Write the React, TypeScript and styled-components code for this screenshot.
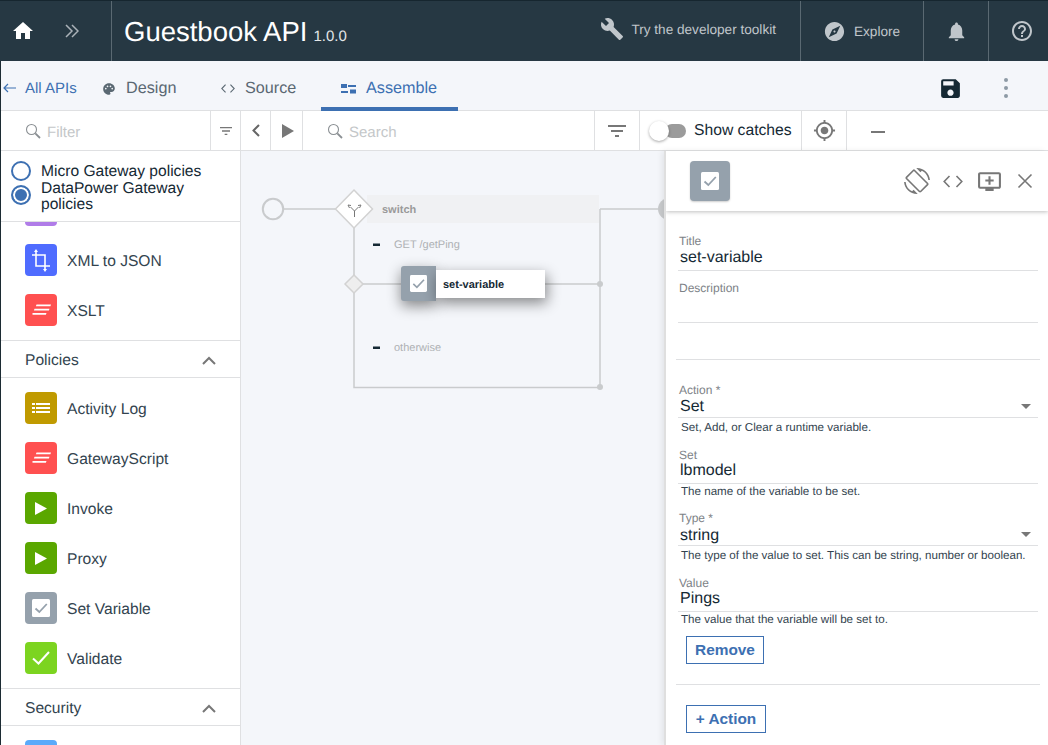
import React from "react";
import styled, { createGlobalStyle } from "styled-components";
import {
  MdAddToQueue,
  MdBuild,
  MdExplore,
  MdFilterList,
  MdGpsFixed,
  MdHelpOutline,
  MdHome,
  MdNotifications,
  MdPalette,
  MdSave,
  MdScreenRotation,
} from "react-icons/md";

const GlobalStyle = createGlobalStyle`
  html, body {
    margin: 0;
    padding: 0;
    background: #1c2b33;
  }
  * {
    box-sizing: border-box;
  }
`;

const Page = styled.div`
  width: 1048px;
  height: 745px;
  padding-left: 1px;
  overflow: hidden;
  display: flex;
  flex-direction: column;
  background: #1c2b33;
  font-family: "Liberation Sans", Arial, sans-serif;
  text-rendering: geometricPrecision;
  color: #152934;
`;

/* top bar */
const Header = styled.header`
  height: 61px;
  flex: none;
  display: flex;
  align-items: stretch;
  margin-left: -1px;
  background: #263843;
  border-top: 1px solid #16262f;
  color: #c0c6cb;
`;

const HomeCell = styled.div`
  width: 112px;
  display: flex;
  align-items: center;
  padding-left: 11px;
  gap: 30px;
  border-right: 1px solid #5a6972;
`;

const Title = styled.div`
  display: flex;
  align-items: baseline;
  flex: 1;
  padding: 13px 0 0 12px;
  font-size: 27.5px;
  line-height: 36px;
  color: #fff;
`;

const Version = styled.span`
  font-size: 15px;
  margin-left: 6px;
  color: #e4e7e9;
`;

const Toolkit = styled.div`
  display: flex;
  align-items: center;
  gap: 7px;
  padding: 0 24px 4px 0;
  font-size: 13.6px;
  border-right: 1px solid #5a6972;
`;

const Explore = styled.div`
  width: 123px;
  display: flex;
  align-items: center;
  gap: 8px;
  padding-left: 22px;
  font-size: 13.6px;
  border-right: 1px solid #5a6972;
`;

const HeaderIcon = styled.div<{ $w: number; $line?: boolean; $pad?: number }>`
  width: ${(p) => p.$w}px;
  display: flex;
  align-items: center;
  justify-content: center;
  padding-left: ${(p) => p.$pad ?? 0}px;
  border-right: ${(p) => (p.$line ? "1px solid #5a6972" : "none")};
`;

/* tabs */
const Nav = styled.nav`
  height: 50px;
  flex: none;
  display: flex;
  align-items: stretch;
  background: #f4f6fa;
  border-bottom: 1px solid #dfe0e2;
  font-size: 16.2px;
`;

const Back = styled.a`
  display: flex;
  align-items: center;
  gap: 9px;
  padding: 5px 0 0 2px;
  color: #3d70b2;
  font-size: 15px;
  width: 81px;
`;

const Tab = styled.div<{ $active?: boolean; $w: number }>`
  width: ${(p) => p.$w}px;
  display: flex;
  align-items: center;
  gap: 10px;
  padding: 9px 0 0 20px;
  color: ${(p) => (p.$active ? "#3d70b2" : "#5a6872")};
  border-bottom: 4px solid ${(p) => (p.$active ? "#3d70b2" : "transparent")};
  margin-bottom: -1px;
`;

const NavActions = styled.div`
  margin-left: auto;
  display: flex;
  align-items: center;
  gap: 41px;
  padding: 5px 40px 0 0;
`;

const Dots = styled.div`
  display: flex;
  flex-direction: column;
  gap: 4px;
  i {
    display: block;
    width: 4px;
    height: 4px;
    border-radius: 50%;
    background: #8d9aa5;
  }
`;

/* toolbar */
const Toolbar = styled.div`
  height: 40px;
  flex: none;
  display: flex;
  background: #fff;
  border-bottom: 1px solid #dfe0e2;
`;

const Cell = styled.div<{ $w: number; $pad?: number }>`
  width: ${(p) => p.$w}px;
  flex: none;
  display: flex;
  align-items: center;
  justify-content: center;
  padding-left: ${(p) => p.$pad ?? 0}px;
  border-right: 1px solid #dfe0e2;
`;

const SearchCell = styled.div<{ $w: number; $pad: number }>`
  width: ${(p) => p.$w}px;
  flex: none;
  display: flex;
  align-items: center;
  gap: 6px;
  padding-left: ${(p) => p.$pad}px;
  font-size: 15px;
  color: #c4c7c9;
  border-right: 1px solid #dfe0e2;
`;

const Placeholder = styled.span`
  margin-top: 3px;
`;

const CatchCell = styled.div`
  width: 162px;
  flex: none;
  position: relative;
  display: flex;
  align-items: center;
  padding-left: 54px;
  font-size: 15.7px;
  white-space: nowrap;
  border-right: 1px solid #dfe0e2;
`;

const Track = styled.span`
  position: absolute;
  left: 25px;
  top: 13px;
  width: 21px;
  height: 14px;
  border-radius: 7px;
  background: #9b9b9b;
`;

const Knob = styled.span`
  position: absolute;
  left: 9px;
  top: 10px;
  width: 20px;
  height: 20px;
  border-radius: 50%;
  background: #fff;
  box-shadow: 0 1px 3px rgba(0, 0, 0, 0.35);
`;

const Minus = styled.div`
  width: 14px;
  height: 2px;
  margin: 2px 0 0 24px;
  align-self: center;
  background: #777;
`;

/* main area */
const Main = styled.div`
  flex: 1;
  min-height: 0;
  display: flex;
`;

const Sidebar = styled.aside`
  width: 240px;
  flex: none;
  display: flex;
  flex-direction: column;
  background: #fff;
  border-right: 1px solid #dfe0e2;
`;

const Radios = styled.div`
  height: 71px;
  flex: none;
  padding: 13px 0 0 10px;
  border-bottom: 1px solid #dfe0e2;
  font-size: 15.6px;
  line-height: 16px;
`;

const RadioRow = styled.label`
  display: flex;
  gap: 10px;
  align-items: flex-start;
`;

const RadioMark = styled.span<{ $on?: boolean }>`
  width: 20px;
  height: 20px;
  flex: none;
  margin-top: ${(p) => (p.$on ? 4 : -3)}px;
  border-radius: 50%;
  border: 2px solid #3d70b2;
  background: ${(p) => (p.$on ? "#3d70b2" : "#fff")};
  box-shadow: ${(p) => (p.$on ? "inset 0 0 0 2px #fff" : "none")};
`;

const PolicyList = styled.div`
  flex: 1;
  min-height: 0;
  overflow: hidden;
`;

const Group = styled.section<{ $offset?: number }>`
  padding: ${(p) => (p.$offset ? 0 : 5)}px 0 5px;
  margin-top: ${(p) => p.$offset ?? 0}px;
`;

const GroupHead = styled.div`
  height: 38px;
  display: flex;
  align-items: center;
  justify-content: space-between;
  padding: 3px 24px 0;
  font-size: 15.6px;
  color: #33444f;
  border-top: 1px solid #dfe0e2;
  border-bottom: 1px solid #dfe0e2;
`;

const PolicyRow = styled.div`
  height: 50px;
  display: flex;
  align-items: center;
  gap: 10px;
  padding-left: 24px;
  font-size: 15.6px;
  color: #33444f;
`;

const PolicyName = styled.span`
  margin-top: 3px;
`;

const PolicyIcon = styled.div<{ $bg: string }>`
  width: 32px;
  height: 32px;
  flex: none;
  display: flex;
  align-items: center;
  justify-content: center;
  border-radius: 4px;
  background: ${(p) => p.$bg};
`;

/* canvas */
const Canvas = styled.div`
  flex: 1;
  min-width: 0;
  position: relative;
  overflow: hidden;
  background: #f4f6fa;
`;

const Wires = styled.svg`
  position: absolute;
  left: 0;
  top: 0;
`;

const Caption = styled.span<{ $x: number; $y: number; $bold?: boolean }>`
  position: absolute;
  left: ${(p) => p.$x}px;
  top: ${(p) => p.$y}px;
  font-size: 11px;
  line-height: 14px;
  font-weight: ${(p) => (p.$bold ? 700 : 400)};
  color: ${(p) => (p.$bold ? "#9a9a9a" : "#aeb1b4")};
`;

const Node = styled.div`
  position: absolute;
  left: 160px;
  top: 115px;
  display: flex;
  align-items: center;
`;

const NodeIcon = styled.div`
  width: 35px;
  height: 35px;
  display: flex;
  align-items: center;
  justify-content: center;
  border-radius: 3px 0 0 3px;
  background: #95a1ac;
  box-shadow: 0 5px 14px rgba(0, 0, 0, 0.45);
`;

const NodeLabel = styled.div`
  width: 109px;
  height: 28px;
  padding-left: 7px;
  background: #fff;
  font-size: 11px;
  font-weight: 700;
  line-height: 30px;
  box-shadow: 2px 5px 14px rgba(0, 0, 0, 0.45);
`;

/* right panel */
const Panel = styled.div`
  width: 382px;
  flex: none;
  overflow: hidden;
  background: #fff;
  box-shadow: -2px 0 0 #dfdfdf, -4px 0 6px rgba(0, 0, 0, 0.08);
  z-index: 1;
`;

const PanelHead = styled.div`
  height: 60px;
  display: flex;
  align-items: center;
  padding: 0 5px 0 24px;
  background: #fff;
  box-shadow: 0 1px 4px rgba(0, 0, 0, 0.25);
`;

const PanelBadge = styled.div`
  width: 40px;
  height: 40px;
  display: flex;
  align-items: center;
  justify-content: center;
  border-radius: 4px;
  background: #95a1ac;
  box-shadow: 0 1px 2px rgba(0, 0, 0, 0.2);
`;

const PanelTools = styled.div`
  margin-left: auto;
  display: flex;
  align-items: center;
`;

const ToolSlot = styled.div`
  width: 36px;
  display: flex;
  justify-content: center;
`;

const Form = styled.div`
  padding: 24px 10px 0 12px;
`;

const Field = styled.div<{ $gap?: number }>`
  margin-top: ${(p) => p.$gap ?? 0}px;
`;

const FieldLabel = styled.div`
  height: 12px;
  padding-left: 1px;
  font-size: 12px;
  line-height: 12px;
  color: #7d8287;
`;

const Value = styled.div<{ $h: number; $pt?: number }>`
  position: relative;
  height: ${(p) => p.$h}px;
  padding: ${(p) => p.$pt ?? 0}px 0 0 2px;
  font-size: 16px;
  line-height: 20px;
  color: #152934;
  border-bottom: 1px solid #dfe0e2;
`;

const Caret = styled.span`
  position: absolute;
  right: 7px;
  top: 8px;
  width: 0;
  height: 0;
  border-left: 5px solid transparent;
  border-right: 5px solid transparent;
  border-top: 5px solid #777;
`;

const Help = styled.div<{ $gap: number }>`
  margin-top: ${(p) => p.$gap}px;
  padding-left: 3px;
  height: 12px;
  font-size: 11.6px;
  line-height: 14px;
  white-space: nowrap;
  color: #33444f;
`;

const Rule = styled.hr<{ $gap: number }>`
  margin: ${(p) => p.$gap}px -2px 0;
  border: none;
  border-top: 1px solid #dfe0e2;
`;

const OutlineButton = styled.button<{ $w: number; $gap: number }>`
  display: block;
  width: ${(p) => p.$w}px;
  height: 28px;
  margin: ${(p) => p.$gap}px 0 0 8px;
  padding: 0;
  background: #fff;
  border: 1px solid #3d70b2;
  color: #3d70b2;
  font-family: inherit;
  font-size: 15.4px;
  font-weight: 700;
`;

const SearchGlyph = () => (
  <svg width="16" height="16" viewBox="0 0 16 16" fill="none" stroke="#8a8f93">
    <circle cx="6.5" cy="6.5" r="5" strokeWidth="1.1" />
    <path d="M10.3 10.3 15 15" strokeWidth="1.8" />
  </svg>
);

const ChevronUp = () => (
  <svg width="14" height="9" viewBox="0 0 14 9" fill="none" stroke="#777" strokeWidth="2">
    <path d="M1 8 7 2l6 6" />
  </svg>
);

const ChevronLeft = () => (
  <svg width="8" height="13" viewBox="0 0 8 13" fill="none" stroke="#666" strokeWidth="2">
    <path d="M7 1 1.5 6.5 7 12" />
  </svg>
);

const DoubleChevron = () => (
  <svg width="14" height="14" viewBox="0 0 14 14" fill="none" stroke="#aab2b8" strokeWidth="1.5">
    <path d="M1 1l6 6-6 6M7 1l6 6-6 6" />
  </svg>
);

const ScriptGlyph = () => (
  <svg width="19" height="14" viewBox="0 0 19 14" fill="#fff">
    <path d="M4.500 1.500l14.500 0-.6 1.800-14.500 0zM2.500 5.700l15 0-.6 1.800-15 0zM0.500 9.900l14 0-.6 1.800-13.400 0z" />
  </svg>
);

const ListGlyph = () => (
  <svg width="18" height="12" viewBox="0 0 18 12" fill="#fff">
    <path d="M0 1h3v2H0zM4 1h14v2H4zM0 5h3v2H0zM4 5h14v2H4zM0 9h3v2H0zM4 9h14v2H4z" />
  </svg>
);

const PlayGlyph = () => (
  <svg width="12" height="13" viewBox="0 0 12 13" fill="#fff">
    <path d="M0 0l12 6.500L0 13z" />
  </svg>
);

const CropGlyph = () => (
  <svg width="21" height="23" viewBox="0 0 21 23" fill="none" stroke="#fff" strokeWidth="1.6">
    <path d="M5 3v14h14M1 6h13v14" />
    <path d="M5 0 3 3h4zM14 23l-2-3h4z" fill="#fff" stroke="none" />
  </svg>
);

const CheckBox = ({ size }: { size: number }) => (
  <svg width={size} height={size} viewBox="0 0 18 18">
    <rect width="18" height="18" rx="1.500" fill="#fff" />
    <path d="M3.500 9.500l3.800 3.500L14.800 5" fill="none" stroke="#95a1ac" strokeWidth="1.800" />
  </svg>
);

const TickGlyph = () => (
  <svg width="18" height="14" viewBox="0 0 18 14" fill="none" stroke="#fff" strokeWidth="2">
    <path d="M1 7.500l5.500 5L17 1" />
  </svg>
);

const AssembleGlyph = () => (
  <svg width="15" height="10" viewBox="0 0 15 10" fill="#3d70b2">
    <path d="M0 0h6v4H0zM7 1h8v2H7zM0 7h7v2H0zM9 5.500h6v4H9z" />
  </svg>
);

const CodeGlyph = ({ w, color, sw }: { w: number; color: string; sw: number }) => (
  <svg width={w} height={w * 0.65} viewBox="0 0 20 13" fill="none" stroke={color} strokeWidth={sw}>
    <path d="M6.500 1 1.200 6.500 6.500 12M13.500 1l5.300 5.500-5.300 5.500" />
  </svg>
);

const Close = () => (
  <svg width="16" height="16" viewBox="0 0 16 16" stroke="#777" strokeWidth="1.6">
    <path d="M1.500 1.500l13 13M14.500 1.500l-13 13" />
  </svg>
);

const Diagram = () => (
  <Wires width="425" height="594" viewBox="0 0 425 594" fill="none">
    <g stroke="#c9cbcd" strokeWidth="1.5">
      <path d="M43 58h52M113 76v160.500h246M359 58v178.500M359 58h70M122 133h38M304 133h55" />
    </g>
    <circle cx="32" cy="58" r="10.200" fill="#f4f6fa" stroke="#c9cbcd" strokeWidth="2" />
    <circle cx="428" cy="58" r="11" fill="#c9cbcd" />
    <rect x="126" y="44" width="232" height="28" fill="#f0f1f3" />
    <path d="M113 39l18.500 19L113 77 94.500 58z" fill="#fff" stroke="#d2d2d2" strokeWidth="1.500" />
    <path
      d="M113.500 66v-6l-4-4M113.500 60l4-4M107 54l1.500 3M107 54l3 .5M120 54l-1.500 3M120 54l-3 .5"
      stroke="#777"
      strokeWidth="1"
    />
    <path d="M113 124l9 9-9 9-9-9z" fill="#eeeeee" stroke="#d2d2d2" strokeWidth="1.500" />
    <circle cx="359" cy="133" r="3" fill="#c9cbcd" />
    <circle cx="359" cy="236" r="3" fill="#c9cbcd" />
    <rect x="132" y="92.500" width="7" height="2.500" fill="#152934" />
    <rect x="132" y="195.500" width="7" height="2.500" fill="#152934" />
  </Wires>
);

const App = () => (
  <Page>
    <GlobalStyle />
    <Header>
      <HomeCell>
        <MdHome size={24} color="#fff" />
        <DoubleChevron />
      </HomeCell>
      <Title>
        Guestbook API<Version>1.0.0</Version>
      </Title>
      <Toolkit>
        <MdBuild size={24} />
        Try the developer toolkit
      </Toolkit>
      <Explore>
        <MdExplore size={23} />
        Explore
      </Explore>
      <HeaderIcon $w={65} $line>
        <MdNotifications size={23} />
      </HeaderIcon>
      <HeaderIcon $w={59} $pad={7}>
        <MdHelpOutline size={24} />
      </HeaderIcon>
    </Header>

    <Nav>
      <Back>
        <svg width="13" height="10" viewBox="0 0 13 10" fill="none" stroke="#3d70b2" strokeWidth="1.2">
          <path d="M13 5H1M5 1 1 5l4 4" />
        </svg>
        All APIs
      </Back>
      <Tab $w={119}>
        <MdPalette size={14} color="#5a6872" />
        Design
      </Tab>
      <Tab $w={120}>
        <CodeGlyph w={14} color="#5a6872" sw={1.6} />
        Source
      </Tab>
      <Tab $w={137} $active>
        <AssembleGlyph />
        Assemble
      </Tab>
      <NavActions>
        <MdSave size={25} color="#152934" />
        <Dots>
          <i />
          <i />
          <i />
        </Dots>
      </NavActions>
    </Nav>

    <Toolbar>
      <SearchCell $w={210} $pad={24}>
        <SearchGlyph />
        <Placeholder>Filter</Placeholder>
      </SearchCell>
      <Cell $w={30}>
        <MdFilterList size={16} color="#777" />
      </Cell>
      <Cell $w={30}>
        <ChevronLeft />
      </Cell>
      <Cell $w={32} $pad={2}>
        <svg width="12" height="14" viewBox="0 0 12 14" fill="#777">
          <path d="M0 0l12 7-12 7z" />
        </svg>
      </Cell>
      <SearchCell $w={292} $pad={24}>
        <SearchGlyph />
        <Placeholder>Search</Placeholder>
      </SearchCell>
      <Cell $w={45}>
        <MdFilterList size={24} color="#777" />
      </Cell>
      <CatchCell>
        <Track />
        <Knob />
        Show catches
      </CatchCell>
      <Cell $w={45}>
        <MdGpsFixed size={23} color="#777" />
      </Cell>
      <Minus />
    </Toolbar>

    <Main>
      <Sidebar>
        <Radios>
          <RadioRow>
            <RadioMark />
            Micro Gateway policies
          </RadioRow>
          <RadioRow>
            <RadioMark $on />
            <span>
              DataPower Gateway
              <br />
              policies
            </span>
          </RadioRow>
        </Radios>
        <PolicyList>
          <Group $offset={-37}>
            <PolicyRow>
              <PolicyIcon $bg="#b07ce8" />
            </PolicyRow>
            <PolicyRow>
              <PolicyIcon $bg="#4f6cff">
                <CropGlyph />
              </PolicyIcon>
              <PolicyName>XML to JSON</PolicyName>
            </PolicyRow>
            <PolicyRow>
              <PolicyIcon $bg="#ff5050">
                <ScriptGlyph />
              </PolicyIcon>
              <PolicyName>XSLT</PolicyName>
            </PolicyRow>
          </Group>
          <GroupHead>
            Policies
            <ChevronUp />
          </GroupHead>
          <Group>
            <PolicyRow>
              <PolicyIcon $bg="#c09a00">
                <ListGlyph />
              </PolicyIcon>
              <PolicyName>Activity Log</PolicyName>
            </PolicyRow>
            <PolicyRow>
              <PolicyIcon $bg="#ff5050">
                <ScriptGlyph />
              </PolicyIcon>
              <PolicyName>GatewayScript</PolicyName>
            </PolicyRow>
            <PolicyRow>
              <PolicyIcon $bg="#5aa700">
                <PlayGlyph />
              </PolicyIcon>
              <PolicyName>Invoke</PolicyName>
            </PolicyRow>
            <PolicyRow>
              <PolicyIcon $bg="#5aa700">
                <PlayGlyph />
              </PolicyIcon>
              <PolicyName>Proxy</PolicyName>
            </PolicyRow>
            <PolicyRow>
              <PolicyIcon $bg="#95a1ac">
                <CheckBox size={18} />
              </PolicyIcon>
              <PolicyName>Set Variable</PolicyName>
            </PolicyRow>
            <PolicyRow>
              <PolicyIcon $bg="#7cd420">
                <TickGlyph />
              </PolicyIcon>
              <PolicyName>Validate</PolicyName>
            </PolicyRow>
          </Group>
          <GroupHead>
            Security
            <ChevronUp />
          </GroupHead>
          <Group>
            <PolicyRow>
              <PolicyIcon $bg="#5aaafa" />
            </PolicyRow>
          </Group>
        </PolicyList>
      </Sidebar>

      <Canvas>
        <Diagram />
        <Caption $x={141} $y={52} $bold>
          switch
        </Caption>
        <Caption $x={153} $y={87}>
          GET /getPing
        </Caption>
        <Caption $x={153} $y={190}>
          otherwise
        </Caption>
        <Node>
          <NodeIcon>
            <CheckBox size={17} />
          </NodeIcon>
          <NodeLabel>set-variable</NodeLabel>
        </Node>
      </Canvas>

      <Panel>
        <PanelHead>
          <PanelBadge>
            <CheckBox size={18} />
          </PanelBadge>
          <PanelTools>
            <ToolSlot>
              <MdScreenRotation size={26} color="#777" />
            </ToolSlot>
            <ToolSlot>
              <CodeGlyph w={20} color="#777" sw={1.6} />
            </ToolSlot>
            <ToolSlot>
              <MdAddToQueue size={25} color="#777" />
            </ToolSlot>
            <ToolSlot>
              <Close />
            </ToolSlot>
          </PanelTools>
        </PanelHead>
        <Form>
          <Field>
            <FieldLabel>Title</FieldLabel>
            <Value $h={24} $pt={1}>
              set-variable
            </Value>
          </Field>
          <Field $gap={11}>
            <FieldLabel>Description</FieldLabel>
            <Value $h={29} />
          </Field>
          <Rule $gap={36} />
          <Field $gap={24}>
            <FieldLabel>Action *</FieldLabel>
            <Value $h={22} $pt={1}>
              Set
              <Caret />
            </Value>
            <Help $gap={3}>Set, Add, or Clear a runtime variable.</Help>
          </Field>
          <Field $gap={16}>
            <FieldLabel>Set</FieldLabel>
            <Value $h={23}>lbmodel</Value>
            <Help $gap={1}>The name of the variable to be set.</Help>
          </Field>
          <Field $gap={15}>
            <FieldLabel>Type *</FieldLabel>
            <Value $h={22} $pt={2}>
              string
              <Caret />
            </Value>
            <Help $gap={3}>The type of the value to set. This can be string, number or boolean.</Help>
          </Field>
          <Field $gap={16}>
            <FieldLabel>Value</FieldLabel>
            <Value $h={23}>Pings</Value>
            <Help $gap={1}>The value that the variable will be set to.</Help>
          </Field>
          <OutlineButton $w={78} $gap={11}>
            Remove
          </OutlineButton>
          <Rule $gap={20} />
          <OutlineButton $w={80} $gap={20}>
            + Action
          </OutlineButton>
        </Form>
      </Panel>
    </Main>
  </Page>
);

export default App;
